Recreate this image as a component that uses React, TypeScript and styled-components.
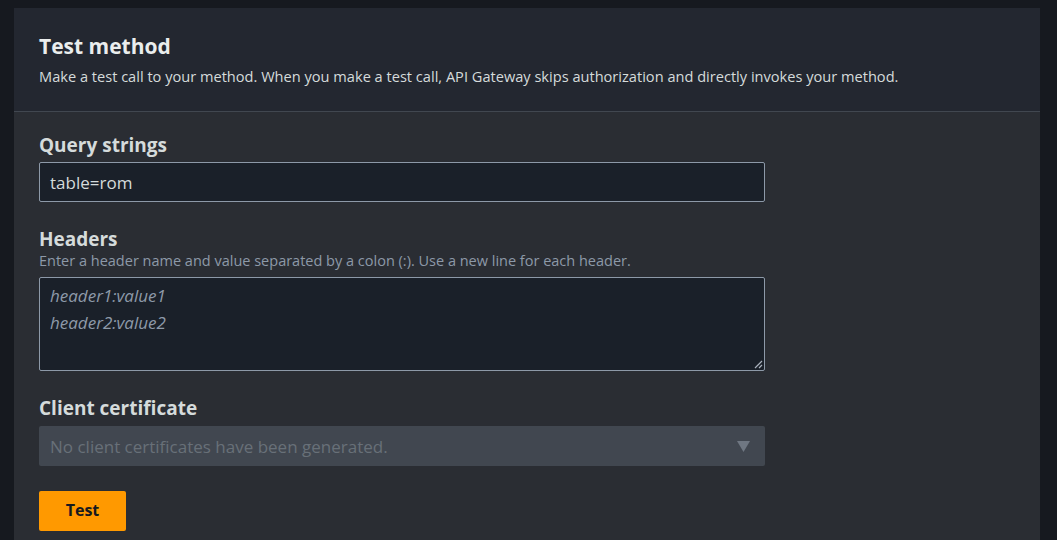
import React from "react";
import styled, { createGlobalStyle } from "styled-components";

const Global = createGlobalStyle`
  html, body { margin: 0; padding: 0; background: #16191f; }
  body { font-family: "Open Sans", "Noto Sans", sans-serif; }
`;

const Page = styled.div`
  width: 1057px;
  height: 540px;
  box-sizing: border-box;
  padding: 8px 17px 0 14px;
  overflow: hidden;
  background: #16191f;
`;

const Panel = styled.section`
  background: #2a2d33;
  height: 600px;
`;

const PanelHeader = styled.header`
  background: #232730;
  border-bottom: 1px solid #414750;
  padding: 24px 25px 0;
  height: 104px;
  box-sizing: border-box;
`;

const Title = styled.h2`
  margin: 0;
  font-size: 21px;
  line-height: 28px;
  font-weight: 700;
  color: #eaeded;
`;

const Description = styled.p`
  margin: 6px 0 0;
  font-size: 14.6px;
  line-height: 20px;
  color: #d5dbdb;
`;

const Body = styled.div`
  padding: 21px 25px 0;
  display: flex;
  flex-direction: column;
`;

const Field = styled.div`
  display: flex;
  flex-direction: column;
  margin-bottom: 25px;
`;

const Label = styled.label`
  font-size: 19px;
  line-height: 24px;
  font-weight: 700;
  color: #d5dbdb;
`;

const Hint = styled.span`
  font-size: 14.5px;
  line-height: 20px;
  color: #8d99a8;
`;

const Control = styled.div<{ $gap: number }>`
  width: 726px;
  box-sizing: border-box;
  margin-top: ${(p) => p.$gap}px;
  border-radius: 2px;
  font-size: 17px;
`;

const TextInput = styled(Control)`
  height: 40px;
  border: 1px solid #8d99a8;
  background: #1a2029;
  padding: 0 10px;
  display: flex;
  align-items: center;
  color: #d5dbdb;
`;

const TextArea = styled(Control)`
  position: relative;
  height: 94px;
  border: 1px solid #8d99a8;
  background: #1a2029;
  padding: 4px 10px;
  line-height: 27px;
  font-style: italic;
  color: #8d99a8;
`;

const Grip = styled.svg`
  position: absolute;
  right: 1px;
  bottom: 1px;
`;

const Select = styled(Control)`
  height: 40px;
  background: #414750;
  padding: 0 15px 0 11px;
  display: flex;
  align-items: center;
  justify-content: space-between;
  color: #687078;
`;

const Button = styled.button`
  width: 87px;
  height: 40px;
  border: none;
  border-radius: 2px;
  background: #ff9900;
  color: #16191f;
  font-family: inherit;
  font-size: 16px;
  font-weight: 700;
  padding: 0 0 2px;
`;

export default function App() {
  return (
    <Page>
      <Global />
      <Panel>
        <PanelHeader>
          <Title>Test method</Title>
          <Description>
            Make a test call to your method. When you make a test call, API Gateway skips authorization and directly invokes your method.
          </Description>
        </PanelHeader>
        <Body>
          <Field>
            <Label>Query strings</Label>
            <TextInput $gap={5}>table=rom</TextInput>
          </Field>
          <Field>
            <Label>Headers</Label>
            <Hint>Enter a header name and value separated by a colon (:). Use a new line for each header.</Hint>
            <TextArea $gap={6}>
              header1:value1
              <br />
              header2:value2
              <Grip width="9" height="9" viewBox="0 0 9 9">
                <path d="M8 1L1 8M8 5L5 8" stroke="#aab2bd" strokeWidth="1.2" />
              </Grip>
            </TextArea>
          </Field>
          <Field>
            <Label>Client certificate</Label>
            <Select $gap={6}>
              <span>No client certificates have been generated.</span>
              <svg width="13" height="11" viewBox="0 0 13 11">
                <path d="M0 0h13L6.5 11z" fill="#6f7782" />
              </svg>
            </Select>
          </Field>
          <Button>Test</Button>
        </Body>
      </Panel>
    </Page>
  );
}
